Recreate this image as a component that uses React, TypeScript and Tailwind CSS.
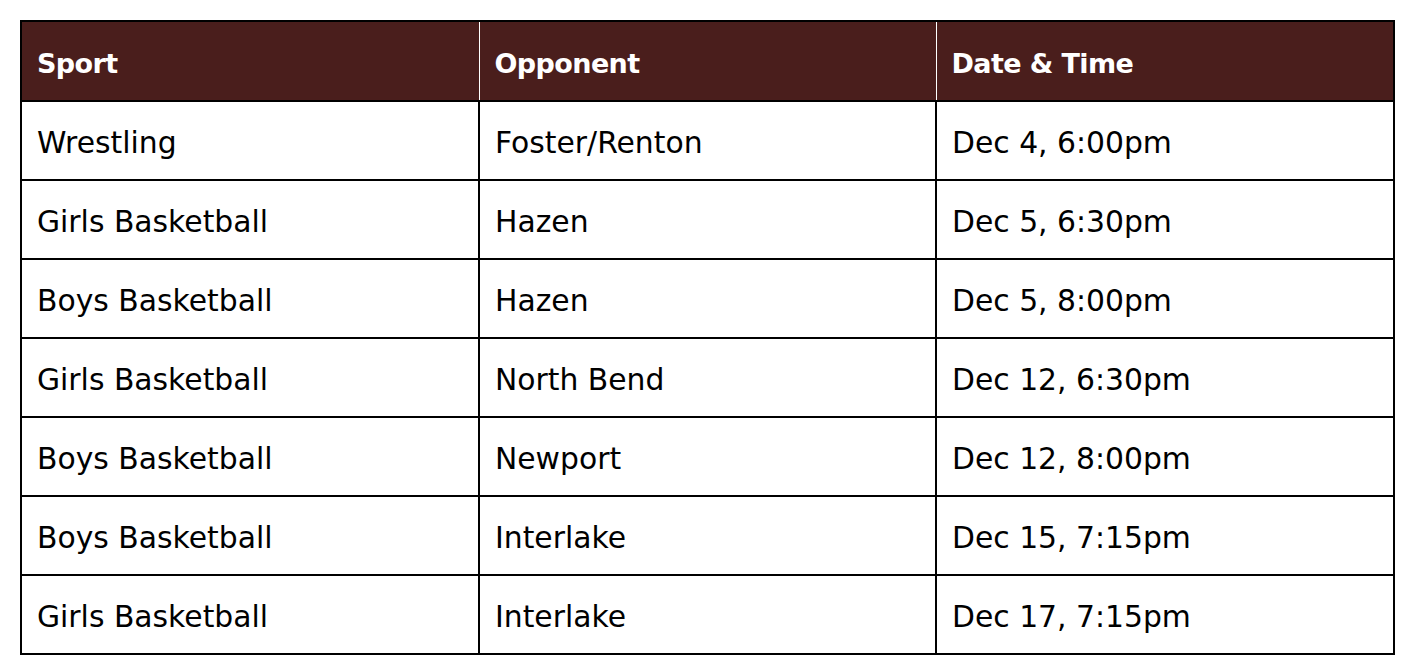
const rows = [
  ['Wrestling', 'Foster/Renton', 'Dec 4, 6:00pm'],
  ['Girls Basketball', 'Hazen', 'Dec 5, 6:30pm'],
  ['Boys Basketball', 'Hazen', 'Dec 5, 8:00pm'],
  ['Girls Basketball', 'North Bend', 'Dec 12, 6:30pm'],
  ['Boys Basketball', 'Newport', 'Dec 12, 8:00pm'],
  ['Boys Basketball', 'Interlake', 'Dec 15, 7:15pm'],
  ['Girls Basketball', 'Interlake', 'Dec 17, 7:15pm'],
];

export default function App() {
  return (
    <div className="min-h-screen bg-white pl-5 pt-5 font-['DejaVu_Sans',sans-serif] text-black">
      <table className="w-[1373px] table-fixed border-collapse border-2 border-black">
        <colgroup>
          <col className="w-[458px]" />
          <col className="w-[457px]" />
          <col className="w-[458px]" />
        </colgroup>
        <thead>
          <tr className="h-[80px] bg-[#4a1e1c] text-white">
            {['Sport', 'Opponent', 'Date & Time'].map((h, i) => (
              <th
                key={h}
                className={`border-b-2 border-black pl-[15px] pr-4 pt-[6px] text-left text-[27px] font-bold tracking-[-0.6px] ${i < 2 ? 'border-r border-r-white' : ''}`}
              >
                {h}
              </th>
            ))}
          </tr>
        </thead>
        <tbody>
          {rows.map((r, ri) => (
            <tr key={ri} className="h-[79px]">
              {r.map((c, ci) => (
                <td key={ci} className="border-2 border-black pl-[15px] pr-4 pt-[5px] text-[29.8px]">
                  {c}
                </td>
              ))}
            </tr>
          ))}
        </tbody>
      </table>
    </div>
  );
}
